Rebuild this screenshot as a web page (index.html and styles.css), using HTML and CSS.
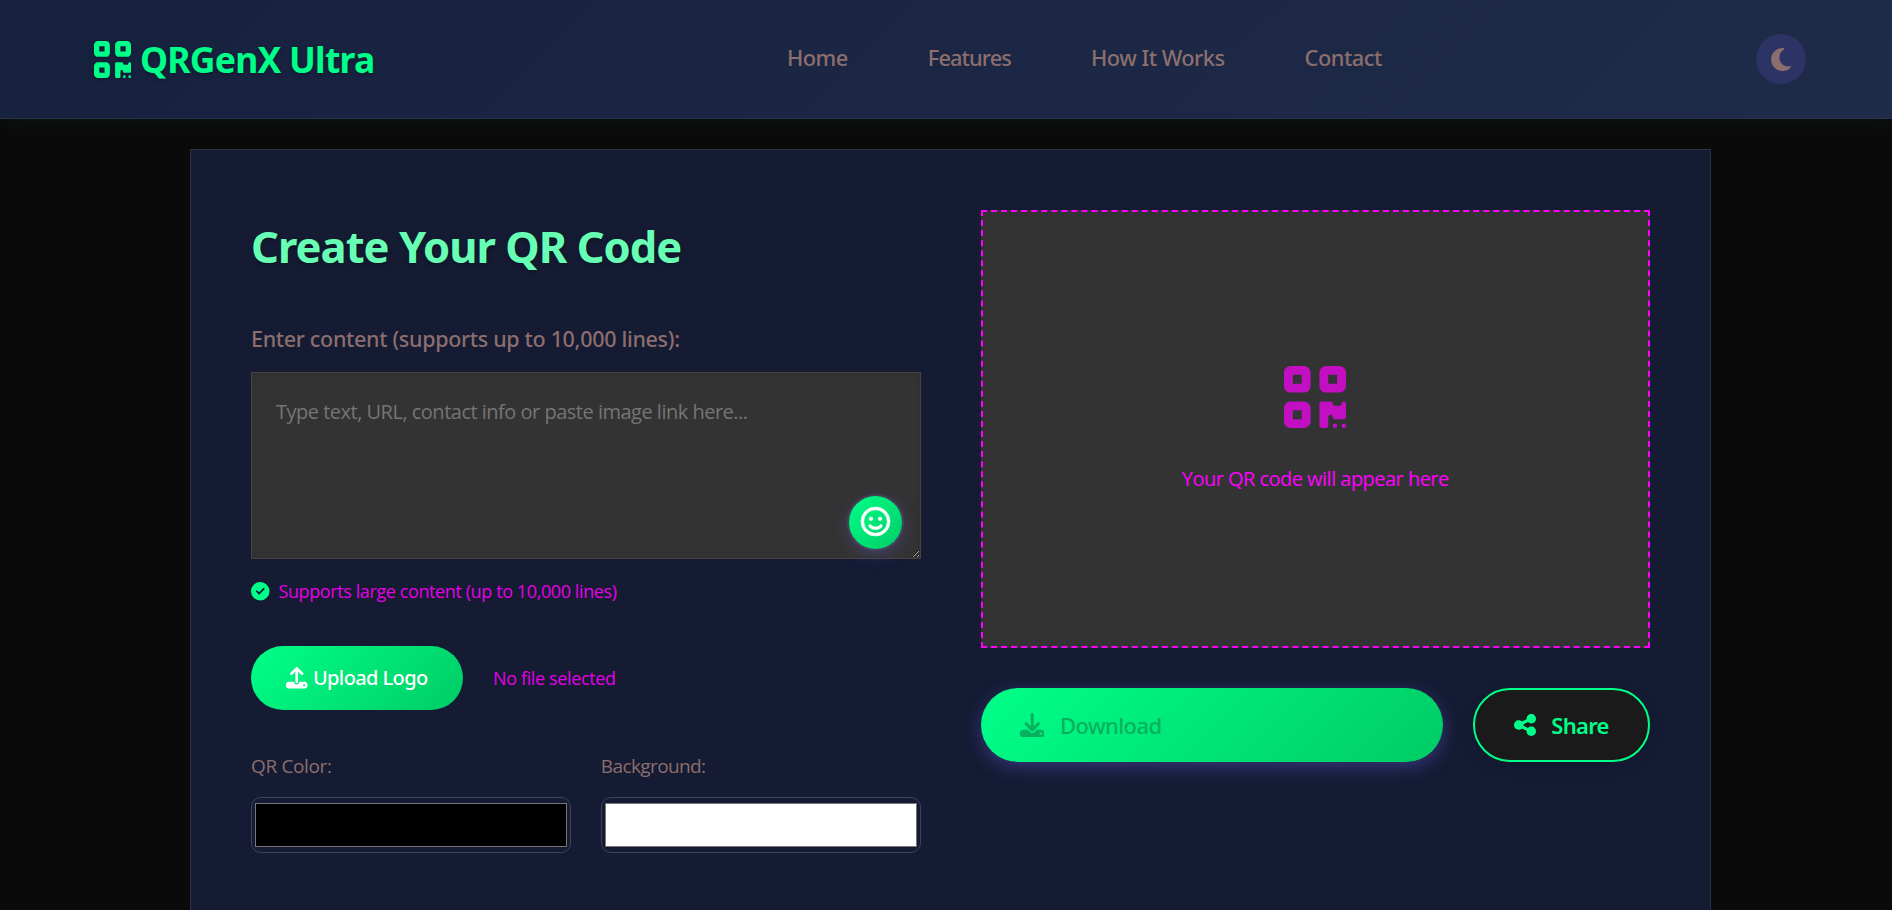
FILE: index.html
```html
<!DOCTYPE html>
<html lang="en">
<head>
<meta charset="utf-8">
<title>QRGenX Ultra</title>
<link rel="stylesheet" href="styles.css">
</head>
<body>
<svg class="sprite" aria-hidden="true">
  <symbol id="qr" viewBox="0 32 448 448"><path d="M0 80C0 53.5 21.5 32 48 32h96c26.5 0 48 21.5 48 48v96c0 26.5-21.5 48-48 48H48c-26.5 0-48-21.5-48-48V80zM64 96v64h64V96H64zM0 336c0-26.5 21.5-48 48-48h96c26.5 0 48 21.5 48 48v96c0 26.5-21.5 48-48 48H48c-26.5 0-48-21.5-48-48V336zm64 16v64h64V352H64zM304 32h96c26.5 0 48 21.5 48 48v96c0 26.5-21.5 48-48 48H304c-26.5 0-48-21.5-48-48V80c0-26.5 21.5-48 48-48zm80 64H320v64h64V96zM256 304c0-8.800 7.200-16 16-16h64c8.800 0 16 7.200 16 16s7.200 16 16 16h32c8.800 0 16-7.200 16-16s7.200-16 16-16s16 7.200 16 16v96c0 8.800-7.200 16-16 16H368c-8.800 0-16-7.200-16-16s-7.200-16-16-16s-16 7.200-16 16v64c0 8.800-7.200 16-16 16H272c-8.800 0-16-7.200-16-16V304zM368 480a16 16 0 1 1 0-32 16 16 0 1 1 0 32zm64 0a16 16 0 1 1 0-32 16 16 0 1 1 0 32z"/></symbol>
</svg>
<header class="navbar">
  <a class="logo"><svg class="logo-icon"><use href="#qr"/></svg><span>QRGenX Ultra</span></a>
  <nav class="nav-links">
    <a class="nav-link">Home</a>
    <a class="nav-link nav-link-tight">Features</a>
    <a class="nav-link">How It Works</a>
    <a class="nav-link">Contact</a>
  </nav>
  <button class="theme-toggle" aria-label="Toggle theme"><svg class="moon" viewBox="0 32 384 448"><path d="M223.5 32C100 32 0 132.300 0 256S100 480 223.500 480c60.600 0 115.500-24.200 155.800-63.400c5-4.900 6.300-12.500 3.100-18.700s-10.100-9.700-17-8.500c-9.800 1.700-19.800 2.600-30.100 2.600c-96.900 0-175.500-78.800-175.500-176c0-65.800 36-123.100 89.300-153.300c6.100-3.500 9.200-10.500 7.700-17.300s-7.300-11.900-14.300-12.500c-6.300-.5-12.600-.8-19-.8z"/></svg></button>
</header>
<main class="generator">
  <section class="form">
    <h1 class="title">Create Your QR Code</h1>
    <label class="content-label" for="content">Enter content (supports up to 10,000 lines):</label>
    <div class="editor">
      <textarea class="content" id="content" placeholder="Type text, URL, contact info or paste image link here..."></textarea>
      <button class="emoji" aria-label="Insert emoji"><svg class="emoji-icon" viewBox="0 0 512 512"><path d="M464 256A208 208 0 1 0 48 256a208 208 0 1 0 416 0zM0 256a256 256 0 1 1 512 0A256 256 0 1 1 0 256zm177.600 62.100C192.800 334.500 218.800 352 256 352s63.200-17.500 78.400-33.900c9-9.700 24.200-10.400 33.900-1.400s10.400 24.200 1.400 33.900c-22 23.800-60 49.400-113.600 49.400s-91.700-25.500-113.600-49.400c-9-9.700-8.400-24.900 1.400-33.900s24.900-8.400 33.900 1.400zM144.400 208a32 32 0 1 1 64 0 32 32 0 1 1 -64 0zm192-32a32 32 0 1 1 0 64 32 32 0 1 1 0-64z"/></svg></button>
    </div>
    <div class="hint"><svg class="hint-icon" viewBox="0 0 512 512"><path d="M256 512A256 256 0 1 0 256 0a256 256 0 1 0 0 512zM369 209L241 337c-9.400 9.400-24.600 9.400-33.900 0l-64-64c-9.400-9.400-9.400-24.600 0-33.900s24.600-9.400 33.900 0l47 47L335 175c9.400-9.400 24.600-9.400 33.900 0s9.400 24.600 0 33.900z"/></svg><span>Supports large content (up to 10,000 lines)</span></div>
    <div class="upload-row">
      <button class="upload"><svg class="upload-icon" viewBox="0 0 512 512"><path d="M288 109.300V352c0 17.700-14.300 32-32 32s-32-14.300-32-32V109.300l-73.400 73.400c-12.500 12.500-32.800 12.500-45.300 0s-12.500-32.800 0-45.300l128-128c12.500-12.500 32.800-12.500 45.300 0l128 128c12.500 12.500 12.500 32.800 0 45.300s-32.800 12.500-45.300 0L288 109.300zM64 352H192c0 35.300 28.700 64 64 64s64-28.700 64-64H448c35.300 0 64 28.700 64 64v32c0 35.300-28.700 64-64 64H64c-35.300 0-64-28.700-64-64V416c0-35.300 28.700-64 64-64zM432 456a24 24 0 1 0 0-48 24 24 0 1 0 0 48z"/></svg><span>Upload Logo</span></button>
      <span class="file-name">No file selected</span>
    </div>
    <div class="colors">
      <label class="color-field"><span class="color-label color-label-qr">QR Color:</span><input class="color" type="color" value="#000000"></label>
      <label class="color-field"><span class="color-label">Background:</span><input class="color" type="color" value="#ffffff"></label>
    </div>
  </section>
  <section class="result">
    <div class="preview">
      <svg class="preview-icon"><use href="#qr"/></svg>
      <p class="preview-text">Your QR code will appear here</p>
    </div>
    <div class="actions">
      <button class="action download"><svg class="download-icon" viewBox="0 0 512 512"><path d="M288 32c0-17.700-14.300-32-32-32s-32 14.300-32 32V274.700l-73.400-73.400c-12.500-12.500-32.800-12.500-45.300 0s-12.500 32.800 0 45.300l128 128c12.500 12.500 32.800 12.500 45.300 0l128-128c12.500-12.500 12.500-32.800 0-45.300s-32.800-12.500-45.300 0L288 274.700V32zM64 352c-35.300 0-64 28.700-64 64v32c0 35.300 28.700 64 64 64H448c35.300 0 64-28.700 64-64V416c0-35.300-28.700-64-64-64H346.500l-45.300 45.300c-25 25-65.500 25-90.500 0L165.500 352H64zm368 56a24 24 0 1 1 0 48 24 24 0 1 1 0-48z"/></svg><span>Download</span></button>
      <button class="action share"><svg class="share-icon" viewBox="0 32 448 448"><path d="M352 224c53 0 96-43 96-96s-43-96-96-96s-96 43-96 96c0 4 .2 8 .7 11.900l-94.100 47C145.400 170.200 121.900 160 96 160c-53 0-96 43-96 96s43 96 96 96c25.900 0 49.400-10.200 66.600-26.900l94.100 47c-.5 3.900-.7 7.800-.7 11.900c0 53 43 96 96 96s96-43 96-96s-43-96-96-96c-25.900 0-49.400 10.200-66.600 26.900l-94.100-47c.5-3.900 .7-7.800 .7-11.900s-.2-8-.7-11.900l94.100-47C302.600 213.800 326.100 224 352 224z"/></svg><span>Share</span></button>
    </div>
  </section>
</main>
</body>
</html>
```
FILE: styles.css
```css
* { box-sizing: border-box; }

html, body { height: 100%; }

body {
  display: flex;
  flex-direction: column;
  margin: 0;
  overflow: hidden;
  background: #0a0a0a;
  color: #8d6e6e;
  font-family: "Open Sans", "Noto Sans", sans-serif;
}

button { padding: 0; border: 0; font: inherit; color: inherit; white-space: nowrap; }
svg { display: block; fill: currentColor; flex: none; }
.sprite { display: none; }

.navbar {
  display: grid;
  flex: none;
  grid-template-columns: 693px 1fr auto;
  align-items: center;
  height: 119px;
  padding: 0 86px 0 94px;
  background: linear-gradient(135deg, #16213e, #1f2c49);
  border-bottom: 1px solid #27324e;
  box-shadow: 0 4px 20px rgba(0, 255, 136, 0.05);
}

.logo {
  display: flex;
  align-items: center;
  gap: 9px;
  color: #00ff88;
  font: 700 35.5px/48px "Noto Sans", sans-serif;
  letter-spacing: -0.76px;
  text-shadow: 0 2px 4px rgba(0, 0, 0, 0.3);
}
.logo-icon { width: 37px; height: 37px; filter: drop-shadow(0 1px 2px rgba(0, 0, 0, 0.3)); }

.nav-links { display: flex; gap: 80px; padding-bottom: 2px; }
.nav-link { font: 500 21.8px/30px "Noto Sans", sans-serif; letter-spacing: -0.5px; }
.nav-link-tight { letter-spacing: -0.9px; }

.theme-toggle {
  display: grid;
  place-items: center;
  width: 50px;
  height: 50px;
  border-radius: 50%;
  background: #2c3365;
}
.moon { width: 20px; height: 23px; }

.generator {
  display: grid;
  flex: 1;
  grid-template-columns: 1fr 1fr;
  gap: 60px;
  width: 1521px;
  margin: 30px 0 0 190px;
  padding: 60px 60px 0;
  border: 1px solid #2a3345;
  border-bottom: 0;
  background: #141b33;
}

.title {
  margin: 6px 0 48px;
  color: #66ffb3;
  font: 700 43.5px/60px "Noto Sans", sans-serif;
  letter-spacing: -0.97px;
  text-shadow: 0 2px 4px rgba(0, 0, 0, 0.3);
}
.content-label {
  display: block;
  margin-bottom: 18px;
  font: 500 21.5px/30px "Noto Sans", sans-serif;
  letter-spacing: -0.31px;
}

.editor { position: relative; }
.content {
  display: block;
  width: 100%;
  height: 187px;
  padding: 22px 24px;
  resize: vertical;
  background: #333;
  border: 1px solid #444;
  color: #8d6e6e;
  font: 400 20px/34px "Open Sans", sans-serif;
  letter-spacing: -0.5px;
  box-shadow: inset 0 2px 5px rgba(0, 0, 0, 0.1);
}
.content::placeholder { color: #757575; }
.emoji {
  position: absolute;
  right: 19px;
  bottom: 10px;
  display: grid;
  place-items: center;
  width: 53px;
  height: 53px;
  border-radius: 50%;
  background: linear-gradient(135deg, #00ff88, #00cc66);
  color: #fff;
  box-shadow: 0 0 0 2px rgba(90, 84, 125, 0.4), 0 5px 18px rgba(108, 92, 231, 0.3);
}
.emoji-icon { width: 29px; height: 29px; margin-top: -2px; stroke: #fff; stroke-width: 12; overflow: visible; }

.hint {
  display: flex;
  align-items: center;
  gap: 9px;
  margin: 19px 0 41px;
  color: #e600e6;
  font-size: 18px;
  line-height: 27px;
  letter-spacing: -0.4px;
}
.hint-icon { width: 18.5px; height: 18.5px; color: #00ff88; }

.upload-row { display: flex; align-items: center; gap: 30px; }
.upload {
  display: flex;
  align-items: center;
  justify-content: center;
  gap: 5px;
  width: 212px;
  height: 64px;
  border-radius: 32px;
  background: linear-gradient(135deg, #00ff88, #00cc66);
  color: #fff;
  font: 500 20px/30px "Noto Sans", sans-serif;
  letter-spacing: -0.6px;
}
.upload-icon { width: 21.5px; height: 21.5px; }
.file-name { color: #e600e6; font-size: 18px; letter-spacing: -0.36px; }

.colors { display: grid; grid-template-columns: 1fr 1fr; gap: 30px; margin-top: 42px; }
.color-field { display: grid; gap: 17px; }
.color-label { font-size: 19px; line-height: 28px; letter-spacing: -0.6px; }
.color-label-qr { letter-spacing: -0.35px; }
.color {
  width: 100%;
  height: 56px;
  padding: 1px;
  border: 1px solid #3c435a;
  border-radius: 10px;
  background: transparent;
}

.preview {
  display: flex;
  flex-direction: column;
  align-items: center;
  justify-content: center;
  gap: 36px;
  height: 438px;
  padding-top: 2px;
  border: 2px dashed #f0f;
  background:
    repeating-linear-gradient(45deg, transparent 0 39px, rgba(80, 80, 160, 0.03) 39px 41px),
    repeating-linear-gradient(-45deg, transparent 0 39px, rgba(80, 80, 160, 0.03) 39px 41px),
    #333;
  color: #f0f;
}
.preview-icon { width: 62px; height: 62px; opacity: 0.7; }
.preview-text { margin: 0; font-size: 20px; line-height: 30px; letter-spacing: -0.53px; }

.actions { display: grid; grid-template-columns: 1fr 177px; gap: 30px; margin-top: 40px; }
.action {
  display: flex;
  align-items: center;
  gap: 15px;
  height: 74px;
  border-radius: 37px;
  font: 500 22px/30px "Noto Sans", sans-serif;
}
.download {
  padding-left: 39px;
  gap: 16px;
  background: linear-gradient(135deg, #00ff88, #00cc66);
  color: #07b160;
  letter-spacing: -0.6px;
  box-shadow: 0 5px 18px rgba(108, 92, 231, 0.4);
}
.download-icon { width: 24.5px; height: 24.5px; }
.share {
  justify-content: center;
  border: 2px solid #00ff88;
  background: #1a1a1a;
  color: #00ff88;
  font-weight: 600;
  letter-spacing: -0.7px;
  box-shadow: 0 5px 15px rgba(0, 0, 0, 0.1);
}
.share-icon { width: 22px; height: 22px; }
```
